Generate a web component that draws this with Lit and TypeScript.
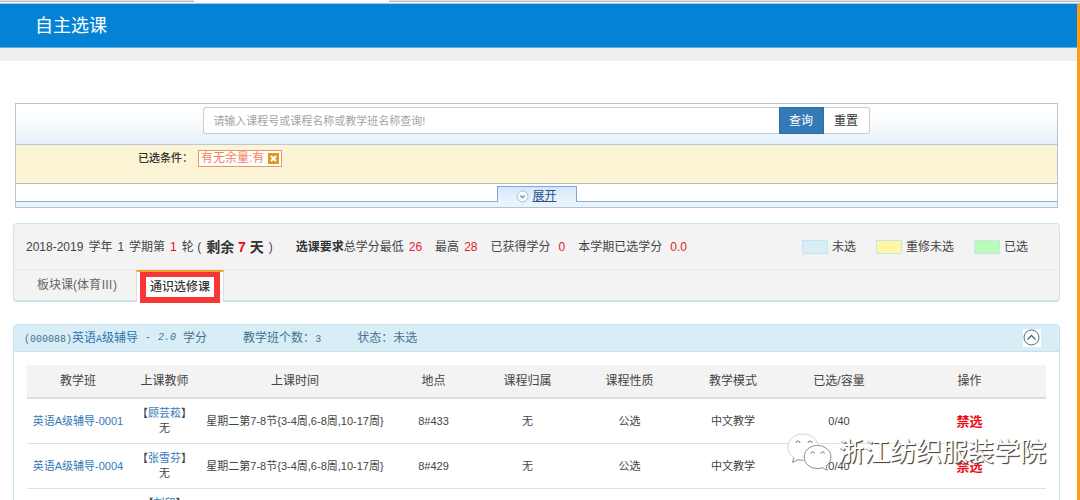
import { LitElement, html, css } from "lit";
import { customElement, property, state } from "lit/decorators.js";

interface TeachingClass {
  name: string;
  teacher: string;
  title: string;
  time: string;
  place: string;
  owner: string;
  nature: string;
  mode: string;
  quota: string;
}

const CLASSES: TeachingClass[] = [
  { name: "英语A级辅导-0001", teacher: "顾芸菘", title: "无", time: "星期二第7-8节{3-4周,6-8周,10-17周}", place: "8#433", owner: "无", nature: "公选", mode: "中文教学", quota: "0/40" },
  { name: "英语A级辅导-0004", teacher: "张雪芬", title: "无", time: "星期二第7-8节{3-4周,6-8周,10-17周}", place: "8#429", owner: "无", nature: "公选", mode: "中文教学", quota: "0/40" },
  { name: "", teacher: "刘印", title: "", time: "", place: "", owner: "", nature: "", mode: "", quota: "" },
];

const COLUMNS = ["教学班", "上课教师", "上课时间", "地点", "课程归属", "课程性质", "教学模式", "已选/容量", "操作"];

@customElement("course-filter")
export class CourseFilter extends LitElement {
  static styles = css`
    :host { display: block; border: 1px solid #b3c3d3; }
    * { box-sizing: border-box; }
    .search { display: flex; justify-content: center; padding: 3px 0 10px; background: linear-gradient(#fff, #fbfdfe 40%, #e4f0fb); border-bottom: 1px solid #b9c9cf; }
    .group { display: flex; width: 64%; height: 27px; }
    input, button { font: 11px/16px "Liberation Sans", "Noto Sans CJK SC", sans-serif; margin: 0; }
    input { flex: 1; min-width: 0; border: 1px solid #ccc; border-right: 0; border-radius: 3px 0 0 3px; padding: 0 9px; background: #fff; color: #444; outline: none; }
    input::placeholder { color: #a4a4a4; opacity: 1; }
    .query { width: 45px; padding: 0; border: 1px solid #2e6da4; background: #337ab7; color: #fff; font-size: 12px; }
    .reset { width: 46px; padding: 0; border: 1px solid #ccc; border-left: 0; border-radius: 0 3px 3px 0; background: #fff; color: #333; font-size: 12px; }
    .chosen { display: flex; align-items: flex-start; gap: 5px; height: 39px; padding: 5px 0 0 122px; background: #fbf5d6; border-bottom: 1px solid #b8b8b0; font-size: 11px; line-height: 17px; color: #333; font-weight: 500; }
    .tag { display: flex; align-items: center; gap: 4px; height: 17px; padding: 0 2px; border: 1px solid #f0906c; background: #fff; color: #f5825c; font: 12px/15px "Liberation Sans", "Noto Sans CJK SC", sans-serif; }
    .remove { display: flex; width: 11px; height: 11px; padding: 0; border: 0; background: #dd9a1e; }
    .remove svg { width: 11px; height: 11px; }
    .more { display: flex; align-items: flex-end; height: 18px; }
    .line { flex: 1; height: 1px; background: #82b0e2; }
    .toggle { display: flex; justify-content: center; align-items: center; gap: 3px; width: 80px; height: 16px; padding: 3px 0 0; border: 1px solid #7ba8dc; border-bottom: 0; background: linear-gradient(#d5e6f9, #edf5fd); font-size: 12px; line-height: 15px; color: #274f8c; text-decoration: none; }
    .toggle svg { width: 13px; height: 13px; }
    .toggle span { text-decoration: underline; }
    .foot { height: 5px; background: #e9f3fb; }
  `;

  render() {
    return html`
      <form class="search" @submit=${(e: Event) => e.preventDefault()}>
        <div class="group">
          <input type="text" aria-label="课程查询" placeholder="请输入课程号或课程名称或教学班名称查询!" />
          <button class="query" type="submit">查询</button>
          <button class="reset" type="reset">重置</button>
        </div>
      </form>
      <div class="chosen">
        <span>已选条件：</span>
        <span class="tag">有无余量:有
          <button class="remove" type="button" aria-label="移除">
            <svg viewBox="0 0 11 11"><path d="M3 3l5 5M8 3l-5 5" stroke="#fff" stroke-width="2" /></svg>
          </button>
        </span>
      </div>
      <div class="more">
        <div class="line"></div>
        <a class="toggle" href="#more">
          <svg viewBox="0 0 13 13" fill="none"><circle cx="6.500" cy="6.500" r="5.500" fill="#f6fafd" stroke="#a9bccd" /><path d="M4.300 5.500l2.200 2.200 2.200-2.200" stroke="#6f8ba6" stroke-width="1.200" /></svg>
          <span>展开</span>
        </a>
        <div class="line"></div>
      </div>
      <div class="foot"></div>
    `;
  }
}

@customElement("round-panel")
export class RoundPanel extends LitElement {
  @state() private active = 1;

  static styles = css`
    :host { display: block; border: 1px solid #cbe6ee; border-bottom: 2px solid #cbe0e8; border-radius: 4px; background: #f3f3f3; color: #444; font-size: 12px; }
    * { box-sizing: border-box; }
    .info { display: flex; align-items: center; gap: 13px; height: 46px; padding: 0 31px 0 12px; border-bottom: 1px solid #e9e9e9; white-space: nowrap; line-height: 18px; }
    .part { display: flex; align-items: center; gap: 5px; }
    .term { margin-right: 10px; }
    .big { font-size: 14px; font-weight: 700; color: #333; }
    .red { color: #e6202c; }
    .big .red, .round { color: #f00a0a; }
    .own { gap: 8px; }
    b { color: #333; }
    .legend { display: flex; gap: 20px; margin: 0 0 0 auto; padding: 0; list-style: none; }
    .legend li { display: flex; align-items: center; gap: 4px; }
    .swatch { width: 26px; height: 14px; border: 1px solid #c5e4ec; }
    .none { background: #d9edf7; }
    .retake { background: #fff6a5; }
    .picked { background: #b9fdb9; }
    .tabs { display: flex; gap: 3px; height: 30px; padding-left: 7px; }
    .tab { border: 0; background: none; padding: 0 16px; font: 12px/18px "Liberation Sans", "Noto Sans CJK SC", sans-serif; color: #666; }
    .tab.on { height: 32px; border-top: 2px solid #f0a030; border-left: 1px solid #ddd; border-right: 1px solid #ddd; background: #fff; color: #333; padding: 0 3px; font-weight: 500; }
    .tab.on span { display: block; border: 6px solid #f93636; border-top-width: 5px; height: 31px; padding: 0 4px; line-height: 20px; background: #fff; }
  `;

  render() {
    const tabs = ["板块课(体育Ⅲ)", "通识选修课"];
    return html`
      <div class="info">
        <div class="part term">
          <span>2018-2019</span><span>学年</span><span>1</span><span>学期第</span><span class="round">1</span><span>轮 (</span>
          <span class="big">剩余 <span class="red">7</span> 天</span><span>)</span>
        </div>
        <div class="part"><span><b>选课要求</b>总学分最低</span><span class="red">26</span></div>
        <div class="part"><span>最高</span><span class="red">28</span></div>
        <div class="part own"><span>已获得学分</span><span class="red">0</span></div>
        <div class="part own"><span>本学期已选学分</span><span class="red">0.0</span></div>
        <ul class="legend">
          <li><i class="swatch none"></i>未选</li>
          <li><i class="swatch retake"></i>重修未选</li>
          <li><i class="swatch picked"></i>已选</li>
        </ul>
      </div>
      <div class="tabs" role="tablist">
        ${tabs.map((t, i) => html`<button class="tab ${i === this.active ? "on" : ""}" role="tab" aria-selected=${i === this.active} @click=${() => (this.active = i)}><span>${t}</span></button>`)}
      </div>
    `;
  }
}

@customElement("course-panel")
export class CoursePanel extends LitElement {
  @property({ attribute: false }) rows: TeachingClass[] = [];

  static styles = css`
    :host { display: block; border: 1px solid #c3e2ea; border-radius: 4px 4px 0 0; background: #fff; }
    * { box-sizing: border-box; }
    .head { display: flex; align-items: center; gap: 7px; height: 27px; padding: 0 18px 0 10px; background: #d9edf7; border-bottom: 1px solid #c3e2ea; border-radius: 3px 3px 0 0; font-size: 12px; line-height: 16px; color: #3d7592; white-space: nowrap; }
    .code { font-family: "Liberation Mono", monospace; font-size: 10px; line-height: 12px; }
    .head a { color: #2f74b0; text-decoration: none; }
    .meta { margin-left: 29px; }
    .fold { display: flex; margin-left: auto; width: 18px; height: 18px; padding: 0; border: 0; background: #fff; }
    .fold svg { width: 18px; height: 18px; }
    .wrap { padding: 13px 13px 0; }
    table { width: 100%; table-layout: fixed; border-collapse: separate; border-spacing: 0; font-size: 11px; line-height: 15px; color: #444; text-align: center; }
    .c0 { width: 102px; }
    .c1 { width: 71px; }
    .c2 { width: 190px; }
    .c3 { width: 87px; }
    .c4 { width: 101px; }
    .c5 { width: 103px; }
    .c6 { width: 104px; }
    .c7 { width: 108px; }
    .c8 { width: 153px; }
    th { height: 34px; padding: 0; background: #f3f3f3; border-bottom: 2px solid #ddd; font-size: 12px; font-weight: 400; }
    td { height: 45px; padding: 0; border-bottom: 1px solid #e2e2e2; vertical-align: middle; white-space: nowrap; }
    td a { color: #337ab7; text-decoration: none; }
    .ban { font-size: 13px; font-weight: 700; color: #f00a14; }
  `;

  render() {
    return html`
      <div class="head">
        <span><span class="code">(000088)</span><a href="#course">英语<span class="code">A</span>级辅导</a></span>
        <span class="code">-</span><i class="code">2.0</i><span>学分</span>
        <span class="meta">教学班个数：<span class="code">3</span></span>
        <span class="meta">状态：未选</span>
        <button class="fold" type="button" aria-label="收起">
          <svg viewBox="0 0 18 18" fill="none" stroke="#4b6b80"><circle cx="8.500" cy="8.500" r="7.500" /><path d="M4.500 10.500l4-4 4 4" stroke-width="1.300" /></svg>
        </button>
      </div>
      <div class="wrap">
        <table>
          <colgroup>${COLUMNS.map((_, i) => html`<col class="c${i}" />`)}</colgroup>
          <thead><tr>${COLUMNS.map((c) => html`<th scope="col">${c}</th>`)}</tr></thead>
          <tbody>
            ${this.rows.map((r) => html`
              <tr>
                <td><a href="#class">${r.name}</a></td>
                <td>【<a href="#teacher">${r.teacher}</a>】<br />${r.title || "\u00a0"}</td>
                <td>${r.time}</td>
                <td>${r.place}</td>
                <td>${r.owner}</td>
                <td>${r.nature}</td>
                <td>${r.mode}</td>
                <td>${r.quota}</td>
                <td class="ban">${r.name ? "禁选" : ""}</td>
              </tr>`)}
          </tbody>
        </table>
      </div>
    `;
  }
}

@customElement("app-root")
export class AppRoot extends LitElement {
  static styles = css`
    :host { display: flex; flex-direction: column; position: relative; height: 100vh; overflow: hidden; background: #fff; font-family: "Liberation Sans", "Noto Sans CJK SC", sans-serif; }
    * { box-sizing: border-box; }
    .strip { display: flex; flex: none; justify-content: space-between; height: 4px; border-bottom: 1px solid #a9cbe4; background: #fcfcfc; }
    .strip i { height: 2px; background: #e4e4e4; border-bottom: 1px solid #b8b8b8; }
    .left { width: 18%; }
    .right { width: 64%; }
    .page { flex: 1; min-height: 0; border-right: 3px solid #ff9c0f; }
    header { display: flex; align-items: center; height: 44px; padding-left: 35px; background: #0483d6; border-bottom: 1px solid #5fb0e6; }
    h1 { margin: 0; font-size: 18px; line-height: 24px; font-weight: 400; color: #fff; }
    .band { height: 13px; background: #efefef; }
    main { display: flex; flex-direction: column; padding: 42px 17px 0 13px; }
    course-filter { margin: 0 2px; }
    round-panel { margin-top: 15px; }
    course-panel { margin-top: 22px; }
    .mark { position: absolute; right: 34px; bottom: 29px; display: flex; align-items: center; gap: 6px; font-size: 26px; line-height: 36px; color: #fff; text-shadow: 1px 1px 1px #444, 1px 1px 0 #888; pointer-events: none; }
    .mark svg { width: 45px; height: 38px; }
  `;

  render() {
    return html`
      <div class="strip"><i class="left"></i><i class="right"></i></div>
      <div class="page">
        <header><h1>自主选课</h1></header>
        <div class="band"></div>
        <main>
          <course-filter></course-filter>
          <round-panel></round-panel>
          <course-panel .rows=${CLASSES}></course-panel>
        </main>
      </div>
      <div class="mark">
        <svg viewBox="0 0 45 38" fill="#fff" stroke-linejoin="round">
          <path d="M16 1C7.500 1 1 6.500 1 14c0 4.500 2.300 8.300 6 10.700L5.500 29.500l5.500-3c1.600.5 3.300.8 5 .8 8.500 0 15-5.800 15-13.300S24.500 1 16 1z" stroke="#d4d4d4" />
          <path d="M7 24.700L5.500 29.500l5.500-3c1.600.5 3.300.8 5 .8" stroke="#999" fill="none" />
          <path d="M30.500 12.500c-7.500 0-13.300 5-13.300 11.500s5.800 11.500 13.300 11.500c1.700 0 3.300-.3 4.800-.8l5 2.500-1.300-4.200c3-2.100 4.900-5.300 4.900-9 0-6.500-5.900-11.500-13.400-11.500z" stroke="#8c8c8c" />
          <g fill="none" stroke="#777"><path d="M9 10a2 2 0 0 1 4 0M21 10a2 2 0 0 1 4 0M24 20.500a1.700 1.700 0 0 1 3.400 0M34 20.500a1.700 1.700 0 0 1 3.400 0" /></g>
        </svg>
        <span>浙江纺织服装学院</span>
      </div>
    `;
  }
}
